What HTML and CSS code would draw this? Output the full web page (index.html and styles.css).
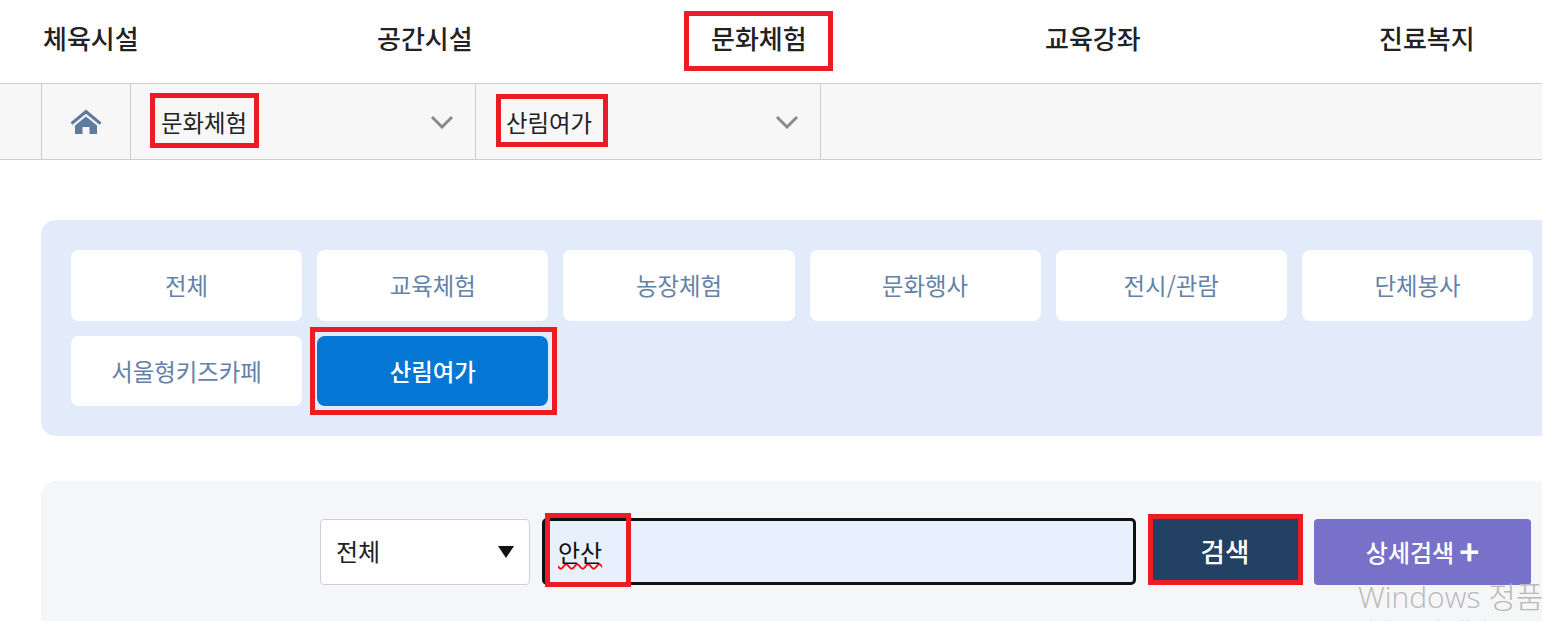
FILE: index.html

```html
<!DOCTYPE html>
<html lang="ko">
<head>
  <meta charset="UTF-8" />
  <title>문화체험 - 산림여가</title>
  <link rel="stylesheet" href="styles.css">
</head>
<body>
  <div class="page">

    <!-- Top menu -->
    <nav class="top-menu">
      <a class="top-item">체육시설</a>
      <a class="top-item">공간시설</a>
      <a class="top-item">문화체험</a>
      <a class="top-item">교육강좌</a>
      <a class="top-item">진료복지</a>
    </nav>

    <!-- Breadcrumb -->
    <div class="crumbs">
      <div class="crumb-home">
        <svg width="32" height="26" viewBox="0 0 32 26">
          <path d="M16 0.5 L31.5 13.5 L29.5 15.8 L16 4.8 L2.5 15.8 L0.5 13.5 Z" fill="#5d7b9f"/>
          <path d="M16 7.5 L27 16.5 V25 H19.5 V18 H12.5 V25 H5 V16.5 Z" fill="#5d7b9f"/>
        </svg>
      </div>
      <div class="crumb">
        <span>문화체험</span>
        <svg class="chevron" width="24" height="14" viewBox="0 0 24 14"><path d="M2 2 L12 12 L22 2" fill="none" stroke="#8a8a8a" stroke-width="3"/></svg>
      </div>
      <div class="crumb">
        <span>산림여가</span>
        <svg class="chevron" width="24" height="14" viewBox="0 0 24 14"><path d="M2 2 L12 12 L22 2" fill="none" stroke="#8a8a8a" stroke-width="3"/></svg>
      </div>
    </div>

    <!-- Category tabs -->
    <div class="tabs">
      <a class="tab">전체</a>
      <a class="tab">교육체험</a>
      <a class="tab">농장체험</a>
      <a class="tab">문화행사</a>
      <a class="tab">전시/관람</a>
      <a class="tab">단체봉사</a>
      <a class="tab">서울형키즈카페</a>
      <a class="tab tab-on">산림여가</a>
    </div>

    <!-- Search -->
    <div class="search">
      <div class="search-select">
        <span>전체</span>
        <i class="select-arrow"></i>
      </div>
      <div class="search-input"><span class="typo">안산</span></div>
      <button class="btn-search">검색</button>
      <button class="btn-detail">상세검색<span class="plus">+</span></button>
    </div>

    <!-- Red annotation boxes -->
    <div class="mark mark-top"></div>
    <div class="mark mark-crumb1"></div>
    <div class="mark mark-crumb2"></div>
    <div class="mark mark-tab"></div>
    <div class="mark mark-input"></div>
    <div class="mark mark-btn"></div>

    <!-- Windows watermark -->
    <div class="watermark">
      <div class="wm-title">Windows 정품 인증</div>
      <div class="wm-sub">설정으로 이동하여 Windows를 정품 인증합니다.</div>
    </div>
  </div>
</body>
</html>
```

FILE: styles.css

```css
* {
  box-sizing: border-box;
}
body {
  margin: 0;
  background: #fff;
  font-family: "Noto Sans CJK KR", "Noto Sans", sans-serif;
  color: #222;
}
.page {
  position: relative;
  width: 1542px;
  height: 621px;
  overflow: hidden;
}

/* top menu */
.top-menu {
  display: flex;
  width: 1700px;
  height: 84px;
  padding-left: 43px;
  border-bottom: 1px solid #ccc;
}
.top-item {
  width: 334px;
  flex: none;
  font-size: 26px;
  font-weight: 500;
  line-height: 76px;
  color: #222;
}

/* breadcrumb */
.crumbs {
  display: flex;
  height: 76px;
  padding-left: 41px;
  background: #f7f7f7;
  border-bottom: 1px solid #ccc;
}
.crumb-home {
  display: flex;
  width: 89px;
  align-items: center;
  justify-content: center;
  border-left: 1px solid #ccc;
}
.crumb {
  display: flex;
  width: 345px;
  padding: 0 21px 0 30px;
  align-items: center;
  justify-content: space-between;
  border-left: 1px solid #ccc;
  font-size: 23.4px;
  color: #222;
}
.crumb:last-child {
  border-right: 1px solid #ccc;
  width: 346px;
}

/* category tabs */
.tabs {
  display: grid;
  grid-template-columns: repeat(6, 1fr);
  grid-auto-rows: 70.5px;
  gap: 15px;
  width: 1522px;
  margin: 60px 0 0 41px;
  padding: 30px;
  background: #e2ebfa;
  border-radius: 15px;
}
.tab {
  background: #fff;
  border-radius: 8px;
  color: #6482a8;
  font-size: 23.4px;
  line-height: 70px;
  text-align: center;
}
.tab-on {
  background: #0477d4;
  color: #fff;
  font-weight: 500;
}

/* search */
.search {
  display: flex;
  width: 1522px;
  height: 170px;
  margin: 45px 0 0 41px;
  padding: 37px 0 0 279px;
  background: #f5f6f8;
  border-radius: 15px;
  align-items: flex-start;
}
.search-select {
  display: flex;
  width: 210px;
  height: 66px;
  margin-top: 1px;
  padding: 0 15px 3px;
  align-items: center;
  justify-content: space-between;
  background: #fff;
  border: 1px solid #ccd0d6;
  border-radius: 4px;
  font-size: 24px;
}
.select-arrow {
  width: 0;
  height: 0;
  margin-top: 3px;
  border-left: 8px solid transparent;
  border-right: 8px solid transparent;
  border-top: 12px solid #111;
}
.search-input {
  width: 594px;
  height: 67px;
  margin-left: 12px;
  padding-left: 13px;
  background: #e8f0fe;
  border: 3px solid #111;
  border-radius: 5px;
  font-size: 24px;
  line-height: 62px;
  color: #111;
}
.typo {
  text-decoration: underline wavy #ee1111 1.5px;
  text-underline-offset: 1px;
}
.btn-search {
  width: 150px;
  height: 67px;
  margin-left: 14px;
  padding-bottom: 4px;
  background: #234263;
  border: 0;
  color: #fff;
  font: 500 26.5px "Noto Sans CJK KR", sans-serif;
}
.btn-detail {
  width: 217px;
  height: 66px;
  margin: 1px 0 0 14px;
  padding-bottom: 3px;
  background: #7871c9;
  border: 0;
  border-radius: 4px;
  color: #fff;
  font: 500 24px "Noto Sans CJK KR", sans-serif;
}
.plus {
  margin-left: 5px;
  font-size: 34px;
  font-weight: 700;
  line-height: 20px;
  vertical-align: -3px;
}

/* annotations over the page */
.mark {
  position: absolute;
  border: 5px solid #ed1c24;
}
.mark-top { left: 684px; top: 11px; width: 149px; height: 60px; }
.mark-crumb1 { left: 150px; top: 93px; width: 109px; height: 55px; }
.mark-crumb2 { left: 496px; top: 94px; width: 112px; height: 53px; }
.mark-tab { left: 310px; top: 327px; width: 247px; height: 88px; }
.mark-input { left: 545px; top: 513px; width: 86px; height: 74px; }
.mark-btn { left: 1148px; top: 514px; width: 155px; height: 71px; }

.watermark {
  position: absolute;
  left: 1358px;
  top: 576px;
  width: 400px;
  color: #b9b9b9;
}
.wm-title {
  font-family: "Open Sans", "Noto Sans CJK KR", sans-serif;
  font-size: 30px;
  font-weight: 300;
  line-height: 41px;
  white-space: nowrap;
}
.wm-sub {
  font-size: 17px;
  line-height: 22px;
  white-space: nowrap;
}
```
